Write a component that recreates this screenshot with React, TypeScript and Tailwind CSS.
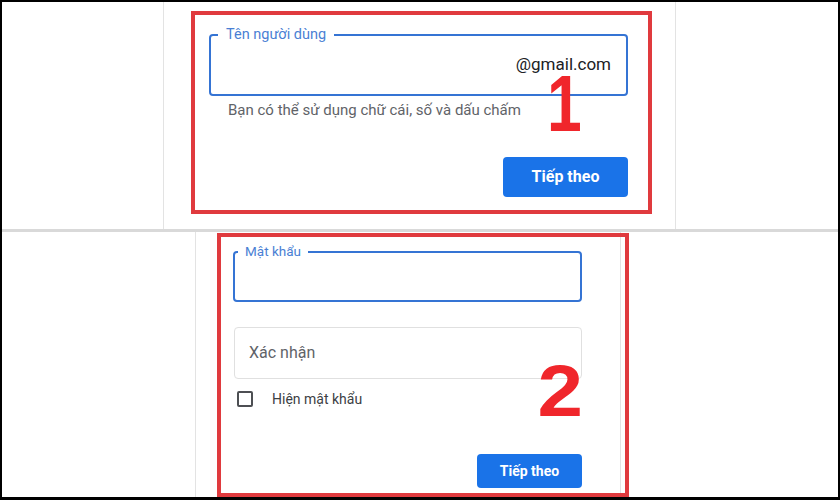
import React from "react";

export default function App() {
  return (
    <div className="relative w-[840px] h-[500px] bg-white border-t-2 border-l-2 border-r-2 border-b-[3px] border-black flex flex-col overflow-hidden font-['Roboto','Liberation_Sans',sans-serif]">
      {/* Top section */}
      <div className="h-[227px] flex shrink-0">
        <div className="ml-[161px] w-[513px] h-full border-x border-[#e3e3e3]">
          <div className="ml-[27px] mt-[9px] w-[461px] h-[203px] border-4 border-[#e03a3e] flex flex-col">
            <div className="relative ml-[14px] mt-[19px] w-[419px] h-[62px] shrink-0 border-2 border-[#3574d4] rounded-[4px] flex items-center justify-end pr-[15px]">
              <span className="absolute left-[7px] -top-[10px] px-2 bg-white text-[14.5px] leading-[18px] text-[#4a7fd4]">
                Tên người dùng
              </span>
              <span className="text-[17px] text-[#202124]">@gmail.com</span>
            </div>
            <div className="ml-[33px] mt-[4px] text-[15px] leading-[20px] text-[#5f6368]">
              Bạn có thể sử dụng chữ cái, số và dấu chấm
            </div>
            <button className="mt-[37px] ml-[308px] w-[125px] h-[40px] shrink-0 rounded-[4px] bg-[#1a73e8] text-white text-[16px] font-bold flex items-center justify-center">
              Tiếp theo
            </button>
          </div>
        </div>
      </div>

      {/* Separator */}
      <div className="h-[3px] bg-[#d9d9d9] shrink-0" />

      {/* Bottom section */}
      <div className="flex-1 flex">
        <div className="ml-[193px] w-[426px] h-full border-x border-[#e3e3e3]">
          <div className="ml-[21px] mt-[1px] w-[412px] h-[264px] border-4 border-[#e03a3e] flex flex-col">
            <div className="relative ml-[12px] mt-[14px] w-[349px] h-[51px] shrink-0 border-2 border-[#3574d4] rounded-[4px]">
              <span className="absolute left-[3px] -top-[10px] px-[7px] bg-white text-[13.5px] leading-[17px] text-[#4a7fd4]">
                Mật khẩu
              </span>
            </div>
            <div className="ml-[13px] mt-[25px] w-[348px] h-[52px] shrink-0 border border-[#e0e0e0] rounded-[4px] flex items-center pl-[14px]">
              <span className="text-[16px] text-[#5f6368]">Xác nhận</span>
            </div>
            <div className="mt-[12px] ml-[16px] h-[16px] flex items-center">
              <div className="w-4 h-4 border-2 border-[#4d4f53] rounded-[2px]" />
              <span className="ml-[19px] text-[14px] text-[#3c4043]">Hiện mật khẩu</span>
            </div>
            <button className="mt-[47px] ml-[256px] w-[105px] h-[34px] shrink-0 rounded-[4px] bg-[#1a73e8] text-white text-[14px] font-bold flex items-center justify-center">
              Tiếp theo
            </button>
          </div>
        </div>
      </div>

      {/* Annotation numbers */}
      <span className="absolute left-[540px] top-[62px] text-[80px] leading-none font-bold text-[#f0262b] font-['Liberation_Sans',Arial,sans-serif] scale-x-[0.78]">
        1
      </span>
      <span className="absolute left-[538px] top-[352px] text-[73px] leading-none font-bold text-[#f0262b] font-['Liberation_Sans',Arial,sans-serif] scale-x-[1.12]">
        2
      </span>
    </div>
  );
}
